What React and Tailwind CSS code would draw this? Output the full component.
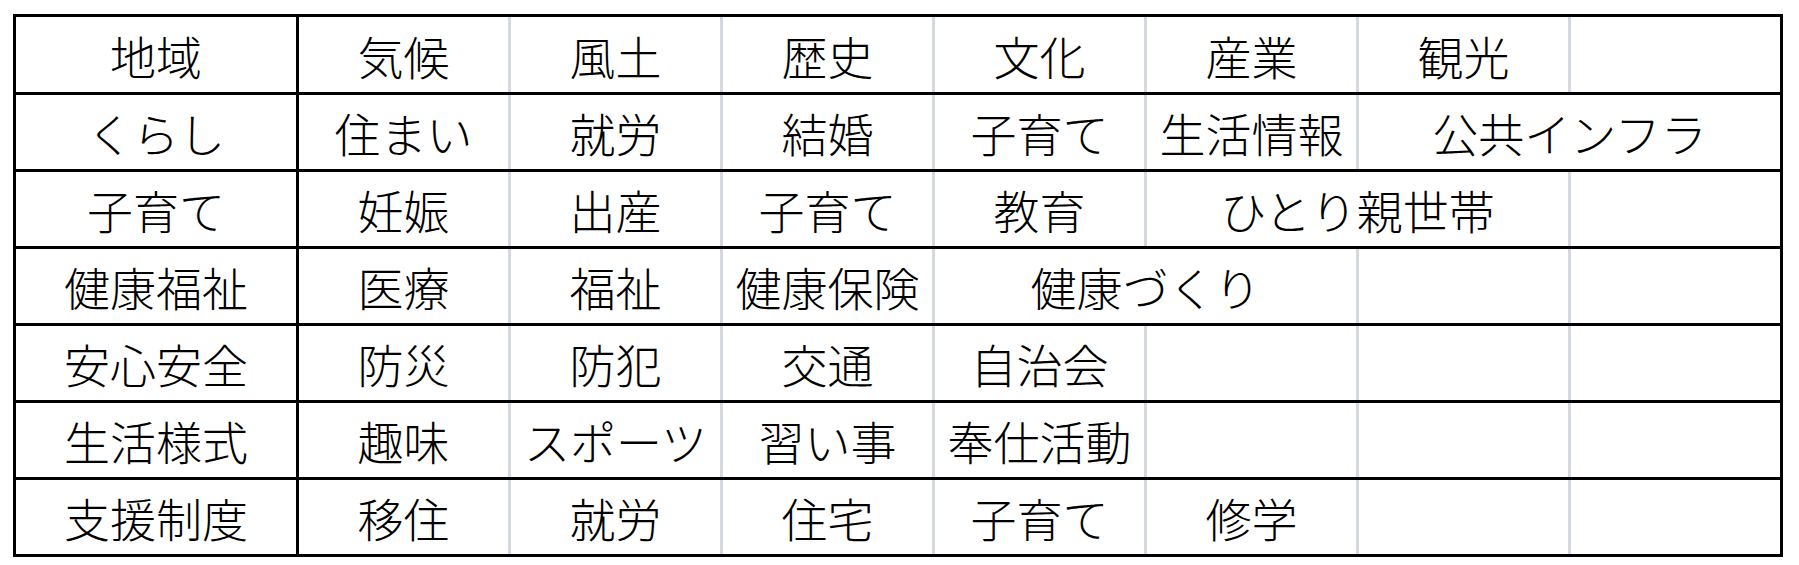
import React from 'react';

// rows: first entry is the category, then [text, span]
const rows = [
  ['地域', [['気候'], ['風土'], ['歴史'], ['文化'], ['産業'], ['観光'], ['']]],
  ['くらし', [['住まい'], ['就労'], ['結婚'], ['子育て'], ['生活情報'], ['公共インフラ', 2]]],
  ['子育て', [['妊娠'], ['出産'], ['子育て'], ['教育'], ['ひとり親世帯', 2], ['']]],
  ['健康福祉', [['医療'], ['福祉'], ['健康保険'], ['健康づくり', 2], [''], ['']]],
  ['安心安全', [['防災'], ['防犯'], ['交通'], ['自治会'], [''], [''], ['']]],
  ['生活様式', [['趣味'], ['スポーツ'], ['習い事'], ['奉仕活動'], [''], [''], ['']]],
  ['支援制度', [['移住'], ['就労'], ['住宅'], ['子育て'], ['修学'], [''], ['']]],
];

function Row({ head, cells, first }) {
  return (
    <div
      className={
        'grid grid-cols-[280px_repeat(7,212px)] ' +
        (first ? 'h-[75px]' : 'h-[77px] border-t-[3px] border-black')
      }
    >
      <div className="flex items-center justify-center whitespace-nowrap">{head}</div>
      {cells.map(([text, span], i) => (
        <div
          key={i}
          className={
            'flex items-center justify-center whitespace-nowrap border-l-[3px] ' +
            (i === 0 ? 'border-black ' : 'border-[#d4d8df] ') +
            (span === 2 ? 'col-span-2' : '')
          }
        >
          {text}
        </div>
      ))}
    </div>
  );
}

export default function App() {
  return (
    <div className="w-[1799px] h-[565px] bg-white pt-[14px] pl-[13px]">
      <div
        className="w-[1770px] border-[3px] border-black text-[46px] font-light leading-none text-black"
        style={{ fontFamily: '"Noto Sans CJK JP", "Noto Sans", sans-serif' }}
      >
        {rows.map(([head, cells], i) => (
          <Row key={i} head={head} cells={cells} first={i === 0} />
        ))}
      </div>
    </div>
  );
}
